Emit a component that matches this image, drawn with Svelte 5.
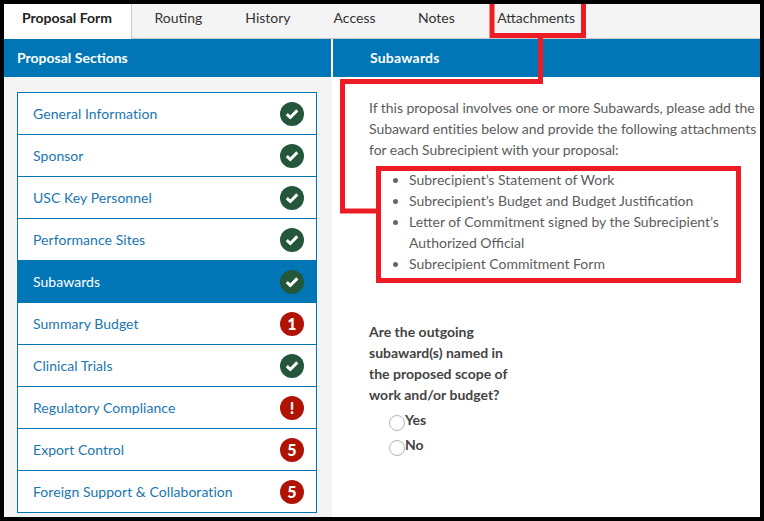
<script>
  const sections = [
    { name: 'General Information', status: 'ok' },
    { name: 'Sponsor', status: 'ok' },
    { name: 'USC Key Personnel', status: 'ok' },
    { name: 'Performance Sites', status: 'ok' },
    { name: 'Subawards', status: 'ok', active: true },
    { name: 'Summary Budget', status: '1' },
    { name: 'Clinical Trials', status: 'ok' },
    { name: 'Regulatory Compliance', status: '!' },
    { name: 'Export Control', status: '5' },
    { name: 'Foreign Support & Collaboration', status: '5' }
  ];
  const tabs = ['Routing', 'History', 'Access', 'Notes', 'Attachments'];
</script>

<div class="frame">
  <nav class="tabs">
    <div class="tab current">Proposal Form</div>
    {#each tabs as t}
      <div class="tab">{t}</div>
    {/each}
  </nav>
  <div class="columns">
    <aside class="left">
      <h2 class="head">Proposal Sections</h2>
      <ul class="list">
        {#each sections as s}
          <li class="item" class:active={s.active}>
            <span>{s.name}</span>
            {#if s.status === 'ok'}
              <span class="badge ok">
                <svg width="14" height="12" viewBox="0 0 14 12"><path d="M1.800 6.200 5.300 9.500 12.300 2.400" fill="none" stroke="#fff" stroke-width="3"/></svg>
              </span>
            {:else}
              <span class="badge bad">{s.status}</span>
            {/if}
          </li>
        {/each}
      </ul>
    </aside>
    <main class="right">
      <h2 class="head sub">Subawards</h2>
      <div class="body">
        <p class="intro">If this proposal involves one or more Subawards, please add the Subaward entities below and provide the following attachments for each Subrecipient with your proposal:</p>
        <ul class="bullets">
          <li>Subrecipient’s Statement of Work</li>
          <li>Subrecipient’s Budget and Budget Justification</li>
          <li>Letter of Commitment signed by the Subrecipient’s Authorized Official</li>
          <li>Subrecipient Commitment Form</li>
        </ul>
        <p class="question">Are the outgoing subaward(s) named in the proposed scope of work and/or budget?</p>
        <div class="radios">
          <label class="radio"><i></i>Yes</label>
          <label class="radio"><i></i>No</label>
        </div>
      </div>
    </main>
  </div>
  <svg class="marks" width="764" height="521" viewBox="0 0 764 521">
    <g fill="none" stroke="#ed1c24" stroke-width="5">
      <path d="M492 4V35.500H583.500V4"/>
      <path d="M540.500 38V81.500H342.500V211H378"/>
      <rect x="378.500" y="168.500" width="360" height="112"/>
    </g>
  </svg>
</div>

<style>
  :global(body) { margin: 0; background: #000; }
  .frame {
    position: relative;
    width: 764px;
    height: 521px;
    box-sizing: border-box;
    padding: 4px;
    background: #000;
    font-family: Lato, "Open Sans", sans-serif;
    font-size: 14px;
    overflow: hidden;
    display: flex;
    flex-direction: column;
  }
  .tabs {
    display: flex;
    height: 35px;
    box-sizing: border-box;
    flex: none;
    background: #f4f4f4;
    border-bottom: 1px solid #c9c9c9;
    color: #333;
  }
  .tab {
    padding: 0 21.500px;
    line-height: 28px;
  }
  .tab:nth-child(2) { padding-left: 22.500px; }
  .tab:nth-child(5) { padding-left: 21px; padding-right: 21px; }
  .tab.current {
    background: #fff;
    color: #222;
    font-weight: 700;
    padding: 0 19px 0 18px;
    height: 35px;
    box-sizing: border-box;
    border-right: 1px solid #c9c9c9;
  }
  .columns { display: flex; flex: 1; min-height: 0; background: #fff; }
  .left { width: 328px; flex: none; background: #f4f4f4; }
  .right { flex: 1; background: #fff; margin-left: 1px; min-width: 0; }
  .head {
    margin: 0;
    height: 38px;
    background: #0076b6;
    color: #fff;
    font-size: 14px;
    font-weight: 700;
    line-height: 38px;
    padding-left: 13px;
  }
  .left .head { margin-right: 1px; box-shadow: 1px 0 0 #fff; }
  .head.sub { padding-left: 37px; letter-spacing: 0.2px; }
  .list {
    list-style: none;
    margin: 15px 0 0 13px;
    padding: 0;
    width: 300px;
    border: 1px solid #0076b6;
    box-sizing: border-box;
    background: #fff;
  }
  .item {
    height: 42px;
    box-sizing: border-box;
    display: flex;
    align-items: center;
    justify-content: space-between;
    padding: 0 12px 0 15px;
    color: #1a76b0;
    letter-spacing: 0.05px;
    border-bottom: 1px solid #0076b6;
  }
  .item:last-child { border-bottom: 0; height: 41px; }
  .item.active { background: #0076b6; color: #fff; }
  .badge {
    width: 24px;
    height: 24px;
    border-radius: 50%;
    display: flex;
    align-items: center;
    justify-content: center;
    color: #fff;
    font-weight: 900;
    font-size: 16px;
    line-height: 1;
  }
  .ok { background: #24573a; }
  .bad { background: #b01204; }
  .body { padding: 0 0 0 36px; color: #5c5c5c; }
  .intro { margin: 20px 0 0; line-height: 21px; width: 392px; letter-spacing: -0.04px; }
  .bullets { margin: 9px 0 0; padding: 0 0 0 40px; width: 352px; line-height: 21px; }
  .bullets li::marker { color: #666; }
  .question {
    margin: 47px 0 0;
    width: 150px;
    font-weight: 700;
    line-height: 21px;
    color: #444;
  }
  .radios { margin: 5px 0 0 20px; }
  .radio {
    display: flex;
    align-items: flex-start;
    height: 25px;
    line-height: 19px;
    font-weight: 700;
    color: #444;
  }
  .radio i {
    width: 14px;
    height: 14px;
    margin-top: 5px;
    border: 1px solid #b5b5b5;
    border-radius: 50%;
    background: #fff;
    flex: none;
  }
  .marks { position: absolute; left: 0; top: 0; pointer-events: none; }
</style>
